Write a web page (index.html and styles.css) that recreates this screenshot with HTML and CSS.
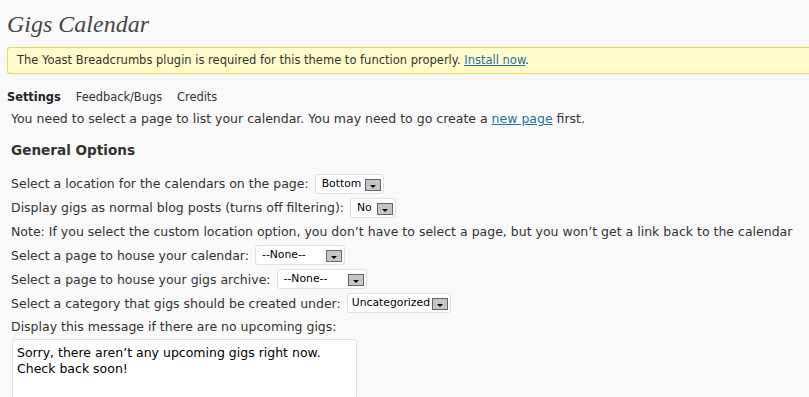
FILE: index.html
```html
<!DOCTYPE html>
<html lang="en">
<head>
    <meta charset="UTF-8">
    <title>Gigs Calendar</title>
    <link rel="stylesheet" href="styles.css">
</head>
<body>
    <div class="wrap">
        <h2 class="page-title">Gigs Calendar</h2>

        <div class="notice">
            The Yoast Breadcrumbs plugin is required for this theme to function properly. <a href="#">Install now</a>.
        </div>

        <ul class="tabs">
            <li class="current">Settings</li>
            <li>Feedback/Bugs</li>
            <li>Credits</li>
        </ul>

        <div class="panel">
            <p class="intro">You need to select a page to list your calendar. You may need to go create a <a href="#">new page</a> first.</p>

            <h3>General Options</h3>

            <div class="row">
                <span>Select a location for the calendars on the page:</span>
                <span class="select w-bottom">Bottom<i class="arrow"></i></span>
            </div>
            <div class="row">
                <span>Display gigs as normal blog posts (turns off filtering):</span>
                <span class="select w-no">No<i class="arrow"></i></span>
            </div>
            <div class="row">
                <span>Note: If you select the custom location option, you don’t have to select a page, but you won’t get a link back to the calendar</span>
            </div>
            <div class="row">
                <span>Select a page to house your calendar:</span>
                <span class="select w-none">--None--<i class="arrow"></i></span>
            </div>
            <div class="row">
                <span>Select a page to house your gigs archive:</span>
                <span class="select w-none">--None--<i class="arrow"></i></span>
            </div>
            <div class="row">
                <span>Select a category that gigs should be created under:</span>
                <span class="select w-cat">Uncategorized<i class="arrow"></i></span>
            </div>
            <div class="row">
                <span>Display this message if there are no upcoming gigs:</span>
            </div>
            <div class="message">Sorry, there aren’t any upcoming gigs right now.<br>Check back soon!</div>
        </div>
    </div>
</body>
</html>
```

FILE: styles.css
```css
body {
    margin: 0;
    background: #f9f9f9;
    color: #333;
    font-family: "DejaVu Sans", Verdana, sans-serif;
    font-size: 12.5px;
    overflow: hidden;
}
.wrap {
    padding-left: 7px;
}
.page-title {
    font-family: "Liberation Serif", Georgia, serif;
    font-style: italic;
    font-weight: normal;
    font-size: 24px;
    color: #464646;
    margin: 0;
    padding-top: 9px;
    height: 38px;
    line-height: 30px;
}
.notice {
    background: #fffbcc;
    border: 1px solid #e6db55;
    border-right: none;
    border-radius: 3px 0 0 3px;
    height: 25px;
    line-height: 25px;
    padding-left: 9px;
    font-size: 11.5px;
    color: #333;
}
a {
    color: #21759b;
}
.tabs {
    list-style: none;
    margin: 0;
    padding: 14px 0 0;
    display: flex;
    gap: 15px;
    height: 33px;
    line-height: 19px;
    box-sizing: border-box;
    font-size: 11.4px;
}
.tabs .current {
    font-weight: bold;
    color: #222;
}
.panel {
    padding-left: 4px;
}
.intro {
    margin: 0;
    height: 24px;
    line-height: 24px;
}
h3 {
    margin: 0;
    font-size: 13.6px;
    height: 41px;
    line-height: 38px;
    color: #333;
}
.row {
    display: flex;
    align-items: center;
    gap: 6px;
    height: 23.85px;
}
.select {
    position: relative;
    display: inline-block;
    box-sizing: border-box;
    height: 20px;
    line-height: 18px;
    border: 1px solid #dfdfdf;
    border-radius: 3px;
    background: #fff;
    color: #000;
    font-size: 10.8px;
    padding-left: 6px;
}
.select .arrow {
    position: absolute;
    right: 2px;
    top: 4px;
    width: 14px;
    height: 10px;
    border: 1px solid #666;
    background: #c6c6c6;
}
.select .arrow::after {
    content: "";
    position: absolute;
    left: 4px;
    top: 5px;
    border-left: 3px solid transparent;
    border-right: 3px solid transparent;
    border-top: 3px solid #000;
}
.w-bottom { width: 69px; }
.w-no { width: 46px; }
.w-none { width: 90px; }
.w-cat { width: 104px; padding-left: 4px; }
.message {
    width: 345px;
    height: 60px;
    box-sizing: border-box;
    margin-left: 1px;
    border: 1px solid #dfdfdf;
    border-radius: 3px;
    background: #fff;
    color: #000;
    padding: 5px 4px;
    line-height: 16px;
}
```
